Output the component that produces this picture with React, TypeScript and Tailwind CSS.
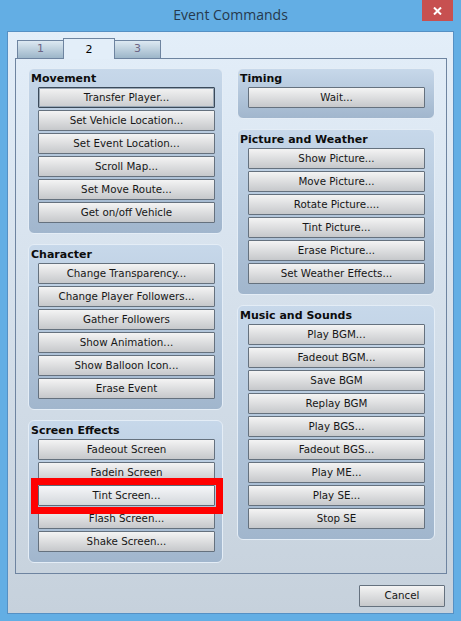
import React from 'react';

interface Group {
  title: string;
  items: string[];
}

const leftGroups: Group[] = [
  {
    title: 'Movement',
    items: ['Transfer Player...', 'Set Vehicle Location...', 'Set Event Location...', 'Scroll Map...', 'Set Move Route...', 'Get on/off Vehicle'],
  },
  {
    title: 'Character',
    items: ['Change Transparency...', 'Change Player Followers...', 'Gather Followers', 'Show Animation...', 'Show Balloon Icon...', 'Erase Event'],
  },
  {
    title: 'Screen Effects',
    items: ['Fadeout Screen', 'Fadein Screen', 'Tint Screen...', 'Flash Screen...', 'Shake Screen...'],
  },
];

const rightGroups: Group[] = [
  { title: 'Timing', items: ['Wait...'] },
  {
    title: 'Picture and Weather',
    items: ['Show Picture...', 'Move Picture...', 'Rotate Picture....', 'Tint Picture...', 'Erase Picture...', 'Set Weather Effects...'],
  },
  {
    title: 'Music and Sounds',
    items: ['Play BGM...', 'Fadeout BGM...', 'Save BGM', 'Replay BGM', 'Play BGS...', 'Fadeout BGS...', 'Play ME...', 'Play SE...', 'Stop SE'],
  },
];

const font = "font-['DejaVu_Sans',sans-serif]";

const CmdButton: React.FC<{ label: string; focused?: boolean; marked?: boolean }> = ({ label, focused, marked }) => (
  <div className={`relative w-[177px] ${marked ? 'z-10' : ''}`}>
    <div
      className={`h-[21px] flex items-center justify-center border text-[10.3px] text-[#161616] leading-none rounded-[1px] ${
        focused
          ? 'border-[#3b4a5a] shadow-[inset_0_0_0_1px_#9aa8b6] bg-gradient-to-b from-[#f3f3f3] to-[#cacccf]'
          : marked
          ? 'border-[#5d6b79] bg-gradient-to-b from-[#f6f7f9] to-[#d3d7dc]'
          : 'border-[#65717e] bg-gradient-to-b from-[#f4f4f4] to-[#c6c8cb]'
      }`}
    >
      {label}
    </div>
    {/* red annotation frame */}
    {marked && <div className="absolute -top-[7px] -left-[7px] -right-[8px] -bottom-[8px] border-[7px] border-[#ff0000]" />}
  </div>
);

const GroupBox: React.FC<{ group: Group; padLeft: string }> = ({ group, padLeft }) => (
  <div className="rounded-[6px] border border-[#e4edf6] bg-gradient-to-b from-[#c7d8ea] to-[#a1b6cd] pb-[10px]">
    <div className="h-[18px] pl-[2px] pt-[3px] text-[11px] font-bold leading-[14px] text-[#0c0c0c]">{group.title}</div>
    <div className={`flex flex-col gap-[2px] ${padLeft}`}>
      {group.items.map((item) => (
        <CmdButton key={item} label={item} focused={item === 'Transfer Player...'} marked={item === 'Tint Screen...'} />
      ))}
    </div>
  </div>
);

const App: React.FC = () => {
  return (
    <div className={`w-[461px] h-[621px] bg-[#63aee4] flex flex-col ${font}`}>
      {/* title bar */}
      <div className="h-[31px] grid grid-cols-[1fr_auto_1fr]">
        <div />
        <div className="pt-[5px] text-[14px] font-['Open_Sans',sans-serif] text-[#26394d] leading-[20px]">Event Commands</div>
        <div className="flex justify-end pr-[8px]">
          <div className="w-[31px] h-[21px] bg-[#c75050] flex items-center justify-center">
            <svg width="9" height="8" viewBox="0 0 9 8">
              <path d="M1 0.5 L8 7.5 M8 0.5 L1 7.5" stroke="#ffffff" strokeWidth="2" />
            </svg>
          </div>
        </div>
      </div>

      {/* client area */}
      <div className="mx-[7px] h-[583px] border border-[#5590c4] bg-gradient-to-b from-[#e3eef9] to-[#c6d1dc] flex flex-col">
        <div className="ml-[9px] mt-[6px] flex items-end h-[20px] relative z-10">
          <div className="w-[47px] h-[18px] border border-b-0 border-[#6e84a0] bg-gradient-to-b from-[#dde9f2] to-[#9db6c9] flex items-center justify-center text-[11px] text-[#6c6585]">1</div>
          <div className="w-[52px] h-[21px] -mb-[1px] -ml-px border border-b-0 border-[#6e84a0] bg-[#e3eef9] flex items-start pt-[3px] justify-center text-[11px] text-[#000000]">2</div>
          <div className="w-[47px] h-[18px] -ml-px border border-b-0 border-[#6e84a0] bg-gradient-to-b from-[#dde9f2] to-[#9db6c9] flex items-center justify-center text-[11px] text-[#6c6585]">3</div>
        </div>

        <div className="ml-[7px] mr-[6px] h-[516px] border border-[#6e84a0] pl-[12px] pr-[11px] pt-[9px] flex gap-[14px]">
          <div className="w-[195px] flex flex-col gap-[10px]">
            {leftGroups.map((g) => (
              <GroupBox key={g.title} group={g} padLeft="pl-[9px]" />
            ))}
          </div>
          <div className="w-[198px] flex flex-col gap-[10px]">
            {rightGroups.map((g) => (
              <GroupBox key={g.title} group={g} padLeft="pl-[10px]" />
            ))}
          </div>
        </div>

        <div className="mt-[11px] mr-[8px] flex justify-end">
          <div className="w-[86px] h-[22px] flex items-center justify-center border border-[#65717e] rounded-[1px] bg-gradient-to-b from-[#f4f4f4] to-[#c6c8cb] text-[10.3px] text-[#161616]">
            Cancel
          </div>
        </div>
      </div>
    </div>
  );
};

export default App;
